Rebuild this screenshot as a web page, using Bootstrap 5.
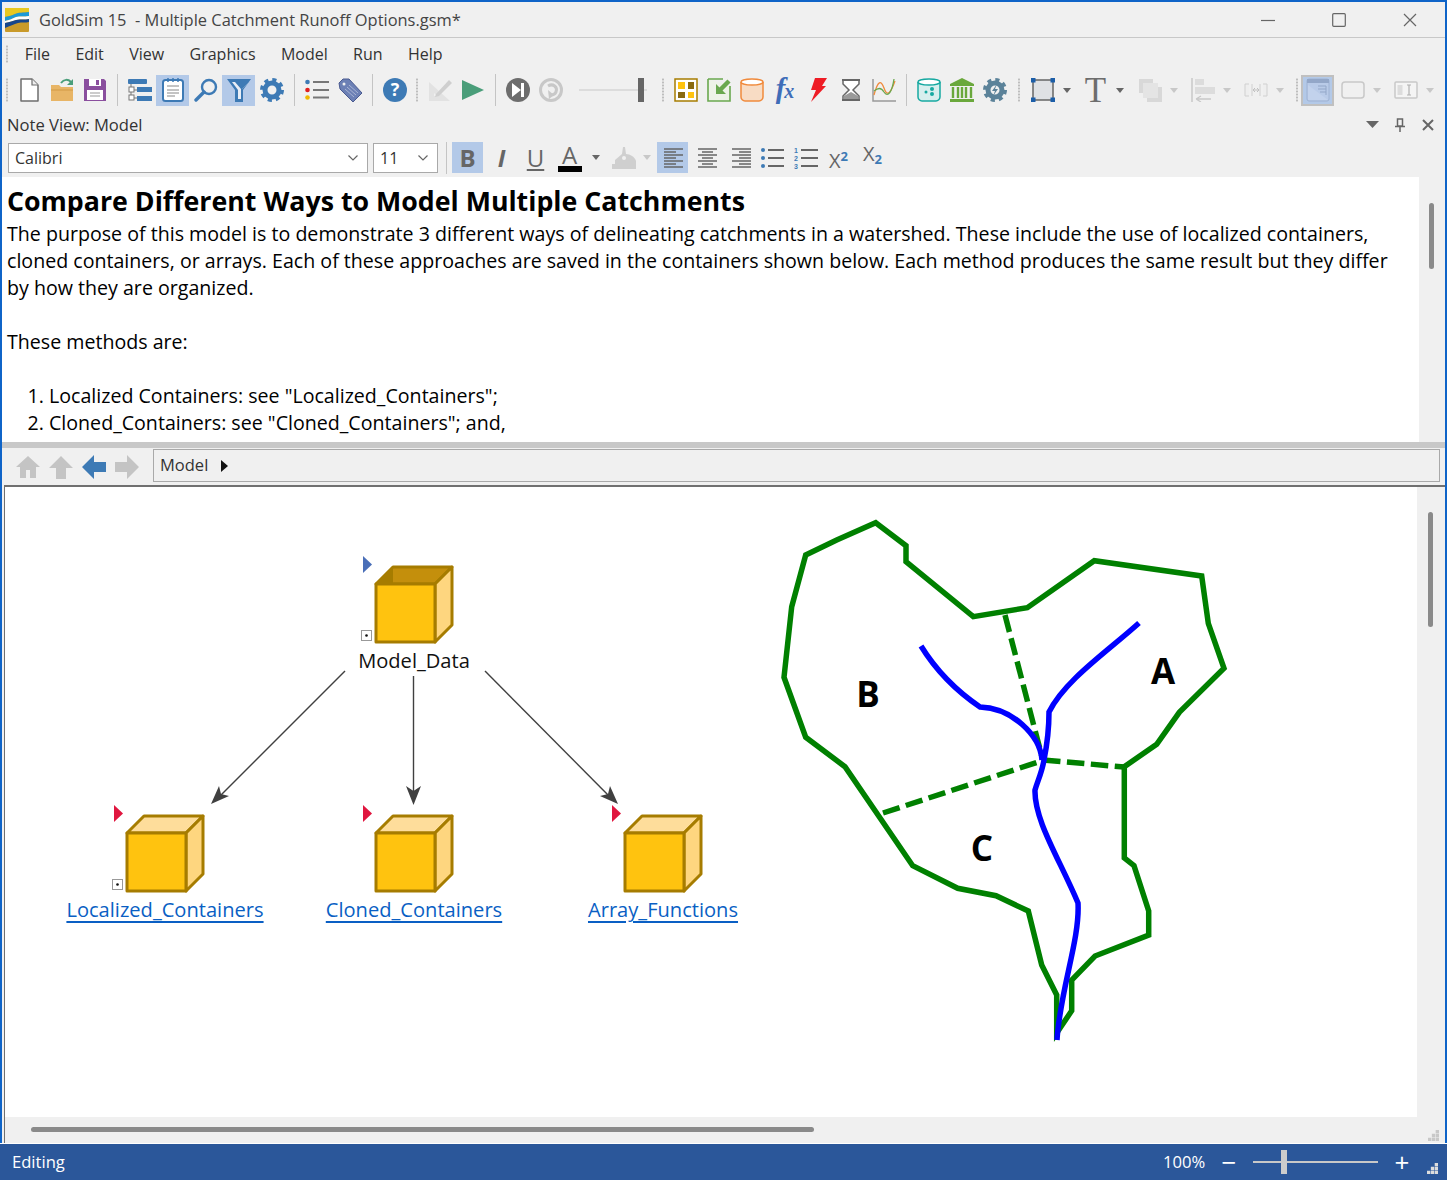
<!DOCTYPE html>
<html lang="en">
<head>
<meta charset="UTF-8" />
<title>GoldSim 15 - Multiple Catchment Runoff Options.gsm*</title>
<link rel="stylesheet" href="https://cdn.jsdelivr.net/npm/bootstrap@5.3.2/dist/css/bootstrap.min.css" />
<style>
  html, body { height: 100%; margin: 0; overflow: hidden; }
  body {
    font-family: "Open Sans", "Noto Sans", sans-serif;
    font-size: 16px;
    color: #333;
    background: #f0f0f0;
  }
  .win { height: 1180px; border: solid #0f64c8; border-width: 2px 2px 0; }
  svg { display: block; flex: none; }

  .titlebar { height: 36px; border-bottom: 1px solid #c8c8c8; color: #444; white-space: pre; }
  .title-text { font-size: 16.45px; padding-top: 2px; }
  .logo { margin: 0 10px 0 3px; }
  .winbtn { width: 71px; height: 35px; }
  .menubar { height: 33px; color: #333; padding-bottom: 2px; }
  .menubar a { color: #333; text-decoration: none; padding: 0 12.7px; }

  .grip { width: 12px; height: 24px; flex: none; background: radial-gradient(circle at center, #bdbdbd 1px, transparent 1.2px) center top / 2px 3px repeat-y; }
  .grip-menu { width: 10px; height: 18px; margin-right: 0; }
  .grip-start { width: 10px; }
  .grip-end { width: 9px; }
  .grip-wide { width: 15px; }
  .sep { width: 12px; height: 32px; flex: none; position: relative; }
  .sep::after { content: ""; position: absolute; left: 5.5px; top: 0; bottom: 0; width: 1px; background: #c4c4c4; }

  .toolbar { height: 38px; }
  .tb { width: 33px; height: 31px; flex: none; display: flex; align-items: center; justify-content: center; padding: 0; border: 0; border-radius: 0; }
  .tb.on, .tb.on:hover { background: #b3c9e8; }
  .tb.on-gray { background: #b3c9e8; outline: 2px solid #c0c0c0; outline-offset: -2px; margin-right: 2px; }
  .t-glyph { font-family: "Liberation Serif", serif; font-size: 35px; line-height: 31px; color: #6d6d6d; }
  .fx-glyph { font-family: "Liberation Serif", serif; font-style: italic; font-weight: 700; font-size: 29px; line-height: 31px; color: #3f6db8; letter-spacing: -1px; }
  .fx-glyph small { font-size: 20px; }
  .caret { width: 16px; height: 31px; flex: none; display: flex; align-items: center; justify-content: center; margin-right: 4px; }
  .caret-wide { margin-right: 5px; }
  .caret::before { content: ""; border: solid transparent; border-width: 5px 4px 0; border-top-color: #666; }
  .caret.off::before { border-top-color: #c8c8c8; }
  .caret-fmt { margin: 0; }
  .caret-fill { margin: 0 2px 0 -3px; }
  .slider-zoom { width: 90px; flex: none; }

  .noteview { height: 30px; padding: 2px 0 0 5px; font-size: 16.6px; }
  .note-tools { gap: 16px; padding-right: 11px; }
  .note-tools svg:first-child { margin-right: -2px; }
  .formatbar { height: 38px; padding-left: 6px; padding-bottom: 1px; }
  .combo { height: 30px; border: 1px solid #a9a9a9; background: #fff; padding: 0 9px 0 6px; font-size: 16px; color: #333; }
  .combo-font { width: 360px; margin-right: 5px; }
  .combo-size { width: 65px; }
  .sep-fmt { margin-left: 2px; }
  .fbtn { width: 31px; height: 31px; flex: none; display: flex; align-items: center; justify-content: center; margin-right: 3px; padding: 0; border: 0; border-radius: 0; font-family: "Open Sans", sans-serif; font-size: 24px; color: #666; line-height: 1; }
  .fbtn.on, .fbtn.on:hover { background: #b3c9e8; }
  .fbtn-tight { margin-right: 0; }
  .fbtn-a { line-height: 22px; }
  .script-x { font-size: 20px; line-height: 20px; position: relative; white-space: nowrap; }
  .script-up { top: 3px; left: 2px; }
  .script-down { top: -4px; left: 2px; }
  .script-x sup, .script-x sub { font-size: 13px; font-weight: 700; color: #3d7ab5; }
  .digits text { font-family: "Liberation Sans", sans-serif; font-size: 7px; font-weight: 700; fill: #3d7ab5; }

  .editor { height: 265px; overflow: hidden; }
  .note {
    width: 1417px; background: #fff; color: #000; padding: 7px 5px 0;
    font-size: 19.62px; line-height: 27px;
  }
  .note h1 { font-size: 26.75px; font-weight: 700; line-height: 34px; margin: 0 0 2px; color: #000; }
  .note p { margin: 0; }
  .note ol { margin: 0; padding-left: 42px; }
  .vscroll { width: 26px; flex: none; position: relative; }
  .vthumb { position: absolute; width: 5px; background: #8a8a8a; border-radius: 3px; }
  .vthumb-note { left: 10px; top: 26px; height: 66px; }
  .vthumb-canvas { left: 11px; top: 25px; height: 115px; }

  .splitter { height: 6px; background: #c8c8c8; }
  .navbar-model { height: 37px; padding-left: 9px; }
  .navbtn { width: 33px; flex: none; display: flex; justify-content: center; }
  .crumb { flex: 1; height: 33px; margin: 0 5px 2px 10px; border: 1px solid #a9a9a9; padding-left: 6px; color: #333; font-size: 16.5px; }
  .crumb-arrow { border: solid transparent; border-width: 6px 0 6px 7px; border-left-color: #111; margin-left: 13px; }

  .frame { height: 658px; border: solid #707070; border-width: 2px 0 0 1px; margin-left: 2px; }
  .canvas { width: 1412px; height: 630px; background: #fff; position: relative; overflow: hidden; }
  .node { position: absolute; width: 240px; text-align: center; color: #111; font-size: 20.1px; line-height: 26px; }
  .node a { color: #0a5fc4; text-underline-offset: 4px; }
  .n-model { left: 289px; top: 161px; }
  .n-local { left: 40px; top: 410px; }
  .n-clone { left: 289px; top: 410px; }
  .n-array { left: 538px; top: 410px; }
  .cube { position: absolute; width: 100px; height: 100px; }
  .c-model { left: 353px; top: 64px; }
  .c-local { left: 104px; top: 313px; }
  .c-clone { left: 353px; top: 313px; }
  .c-array { left: 602px; top: 313px; }
  .map-letter { font-family: "Open Sans", sans-serif; font-weight: 700; font-size: 35px; fill: #000; }

  .hscroll { height: 27px; position: relative; }
  .hthumb { position: absolute; left: 26px; top: 10px; width: 783px; height: 5px; background: #8a8a8a; border-radius: 3px; }
  .sizegrip { position: absolute; right: 6px; bottom: 3px; }

  .statusbar { height: 37px; margin: 0 -2px; border-top: 1px solid #fff; background: #2b579a; color: #fff; padding-left: 12px; font-size: 16.6px; position: relative; }
  .statusbar .sizegrip { right: 9px; bottom: 6px; }
  .zoom-pct { margin-left: auto; width: 40px; }
  .zoom-track { width: 125px; height: 2px; background: #c8c8c8; position: relative; margin: 0 14px 0 14px; }
  .zoom-thumb { position: absolute; left: 28px; top: -11px; width: 6px; height: 24px; background: #ccc; }
  .zoom-btn { width: 20px; font-size: 26px; line-height: 1; text-align: center; font-weight: 400; }
  .status-end { width: 35px; }
</style>
</head>
<body>
<svg width="0" height="0" class="position-absolute">
  <symbol id="cube" viewBox="0 0 100 100">
    <path d="M18 33 35 16H94L77 33Z" fill="#fedd9b" stroke="#a67c00" stroke-width="3" stroke-linejoin="round"/>
    <path d="M77 33 94 16V74L77 91Z" fill="#fed67f" stroke="#a67c00" stroke-width="3" stroke-linejoin="round"/>
    <rect x="18" y="33" width="59" height="58" fill="#ffc30f" stroke="#a67c00" stroke-width="3" stroke-linejoin="round"/>
  </symbol>
  <symbol id="cube-open" viewBox="0 0 100 100">
    <path d="M18 33 35 16H94L77 33Z" fill="#c48f0c" stroke="#a67c00" stroke-width="3" stroke-linejoin="round"/>
    <path d="M18 33 35 16V33Z" fill="#a67c00"/>
    <path d="M77 33 94 16V74L77 91Z" fill="#fed67f" stroke="#a67c00" stroke-width="3" stroke-linejoin="round"/>
    <rect x="18" y="33" width="59" height="58" fill="#ffc30f" stroke="#a67c00" stroke-width="3" stroke-linejoin="round"/>
  </symbol>
  <symbol id="flag" viewBox="0 0 10 18"><path d="M0 0 9 8.500 0 17Z"/></symbol>
  <symbol id="gear" viewBox="0 0 24 24">
    <circle cx="12" cy="12" r="7" fill="none" stroke="currentColor" stroke-width="5"/>
    <circle cx="12" cy="12" r="10" fill="none" stroke="currentColor" stroke-width="4" stroke-dasharray="4 3.850"/>
  </symbol>
  <symbol id="grip-dots" viewBox="0 0 10 10">
    <path fill="currentColor" d="M7 0h3v3H7zM3.500 3.500h3v3h-3zM7 3.500h3v3H7zM0 7h3v3H0zM3.500 7h3v3h-3zM7 7h3v3H7z"/>
  </symbol>
</svg>

<div class="win d-flex flex-column">

  <!-- title bar -->
  <div class="titlebar d-flex align-items-center flex-none">
    <svg class="logo" width="24" height="24" viewBox="0 0 24 24">
      <rect width="24" height="24" rx="1" fill="#c99a2a"/>
      <path d="M0 0H24V4C18 5 14 4 10 6 6 8 3 8 0 9Z" fill="#e8c820"/>
      <path d="M24 4C18 5 14 4 10 6 6 8 3 8 0 9V13C4 12 7 11 11 9 15 8 19 9 24 8Z" fill="#1c9ad6"/>
      <path d="M24 8C19 9 15 8 11 9 7 11 4 12 0 13V15C5 14 8 13 11 12 16 11 20 12 24 11Z" fill="#fff"/>
      <path d="M24 11C20 12 16 11 11 12 8 13 5 14 0 15V20C5 18 9 16 13 15 17 14 21 15 24 14Z" fill="#17468c"/>
    </svg>
    <span class="title-text">GoldSim 15  - Multiple Catchment Runoff Options.gsm*</span>
    <div class="d-flex ms-auto">
      <div class="winbtn d-flex align-items-center justify-content-center"><svg width="14" height="14"><path d="M0 7.500H14" stroke="#666" stroke-width="1.200"/></svg></div>
      <div class="winbtn d-flex align-items-center justify-content-center"><svg width="14" height="14"><rect x=".7" y=".7" width="12.600" height="12.600" rx="1" fill="none" stroke="#666" stroke-width="1.200"/></svg></div>
      <div class="winbtn d-flex align-items-center justify-content-center"><svg width="14" height="14"><path d="M1 1 13 13M13 1 1 13" stroke="#666" stroke-width="1.200"/></svg></div>
    </div>
  </div>

  <!-- menu -->
  <nav class="menubar d-flex align-items-center">
    <div class="grip grip-menu"></div>
    <a href="#">File</a><a href="#">Edit</a><a href="#">View</a><a href="#">Graphics</a><a href="#">Model</a><a href="#">Run</a><a href="#">Help</a>
  </nav>

  <!-- main toolbar -->
  <div class="toolbar d-flex align-items-center">
    <div class="grip grip-start"></div>
    <button class="tb btn"><svg width="24" height="24" viewBox="0 0 24 24"><path d="M4 1H15L21 7V23H4Z" fill="#fff" stroke="#6e6e6e" stroke-width="1.500" stroke-linejoin="round"/><path d="M15 1V7H21" fill="#eee" stroke="#6e6e6e" stroke-width="1.200"/></svg></button>
    <button class="tb btn"><svg width="24" height="24" viewBox="0 0 24 24"><path d="M1 10V7H9L11 9H23V23H1Z" fill="#e8b566"/><path d="M1 12H23" stroke="#d19a45"/><path d="M11 5C14 1 18 1 21 4" fill="none" stroke="#4a9e7a" stroke-width="2"/><path d="M23 1V7H17Z" fill="#4a9e7a"/></svg></button>
    <button class="tb btn"><svg width="24" height="24" viewBox="0 0 24 24"><path d="M1 1H21L23 3V23H1Z" fill="#8a4f9e"/><rect x="6" y="1" width="12" height="7" fill="#fff"/><rect x="13" y="2" width="3" height="5" fill="#8a4f9e"/><rect x="4" y="12" width="16" height="10" fill="#fff"/><path d="M7 15H17M7 18H17" stroke="#999"/></svg></button>
    <div class="sep"></div>
    <button class="tb btn"><svg width="24" height="24" viewBox="0 0 24 24"><rect y="1" width="19" height="5" rx="1" fill="#3d7ab5"/><path d="M3 6V20M3 12H10M3 20H10" stroke="#777" fill="none"/><rect x="1" y="9" width="5" height="5" fill="#fff" stroke="#777"/><rect x="1" y="17" width="5" height="5" fill="#fff" stroke="#777"/><rect x="9" y="9" width="15" height="5" fill="#3d7ab5"/><rect x="9" y="18" width="15" height="5" fill="#3d7ab5"/></svg></button>
    <button class="tb btn on"><svg width="24" height="24" viewBox="0 0 24 24"><rect x="2" y="2" width="20" height="21" rx="2.500" fill="#fff" stroke="#3d7ab5" stroke-width="2"/><path d="M6 8H18M6 12H18M6 15H18M6 18H14" stroke="#888"/><path d="M7 0V4M12 0V4M17 0V4" stroke="#3d7ab5" stroke-width="1.500"/></svg></button>
    <button class="tb btn"><svg width="24" height="24" viewBox="0 0 24 24"><circle cx="15" cy="9" r="7" fill="none" stroke="#3d7ab5" stroke-width="2.400"/><path d="M10 14 2 22" stroke="#3d7ab5" stroke-width="3.400" stroke-linecap="round"/></svg></button>
    <button class="tb btn on"><svg width="24" height="24" viewBox="0 0 24 24"><path d="M0 1H24L16 12V24H8V12Z" fill="#3d7ab5"/><path d="M5 4H22L14 12V21H11V12Z" fill="#e9eef6"/><path d="M8 4H22L15 11V21H14V11Z" fill="#3d7ab5"/></svg></button>
    <button class="tb btn"><svg width="24" height="24" style="color:#3d7ab5"><use href="#gear"/></svg></button>
    <div class="sep"></div>
    <button class="tb btn"><svg width="24" height="24" viewBox="0 0 24 24"><circle cx="2.500" cy="4" r="2.300" fill="#3d7ab5"/><circle cx="2.500" cy="12" r="2.300" fill="#e02020"/><circle cx="2.500" cy="19.500" r="2.300" fill="#f0b800"/><path d="M8 4H24M8 12H24M8 19.500H24" stroke="#777" stroke-width="2"/></svg></button>
    <button class="tb btn"><svg width="24" height="24" viewBox="0 0 24 24"><path d="M1 5 5 1H11L24 15 15 24 2 11Z" fill="#6c80b5" stroke="#4a5a90"/><circle cx="6" cy="6" r="1.500" fill="#f0f0f0"/><path d="M9 9 18 17M11 7 20 15M7 11 16 19" stroke="#a8b4d4"/></svg></button>
    <div class="sep"></div>
    <button class="tb btn"><svg width="24" height="24" viewBox="0 0 24 24"><circle cx="12" cy="12" r="12" fill="#3d7ab5"/><text x="12" y="18" text-anchor="middle" font-family="Open Sans, sans-serif" font-weight="700" font-size="18" fill="#fff">?</text></svg></button>
    <div class="grip"></div>
    <button class="tb btn"><svg width="24" height="24" viewBox="0 0 24 24"><path d="M1 4V23H22Z" fill="#e2e2e2"/><path d="M6 15V18H9Z" fill="#f0f0f0"/><path d="M8 16 21 2 24 5 11 18 7 19Z" fill="#cfcfcf"/></svg></button>
    <button class="tb btn"><svg width="24" height="24" viewBox="0 0 24 24"><path d="M1 2 23 12 1 22Z" fill="#4a9e7a"/></svg></button>
    <div class="sep"></div>
    <button class="tb btn"><svg width="24" height="24" viewBox="0 0 24 24"><circle cx="12" cy="12" r="12" fill="#6d6d6d"/><path d="M6 5 15 12 6 19Z" fill="#fff"/><rect x="15" y="5" width="3" height="14" fill="#fff"/></svg></button>
    <button class="tb btn"><svg width="24" height="24" viewBox="0 0 24 24"><circle cx="12" cy="12" r="10.500" fill="#f0f0f0" stroke="#c8c8c8" stroke-width="3"/><path d="M9 8C14 5 19 9 17 14 16 16 14 17 12 17" fill="none" stroke="#c8c8c8" stroke-width="3"/><path d="M9 12 15 17 10 21Z" fill="#c8c8c8"/></svg></button>
    <div class="slider-zoom"><svg width="90" height="24"><path d="M12 12H80" stroke="#c8c8c8"/><rect x="71" width="6" height="24" fill="#666"/></svg></div>
    <div class="grip"></div>
    <button class="tb btn"><svg width="24" height="24" viewBox="0 0 24 24"><rect x="1" y="1" width="22" height="22" fill="#fff" stroke="#a67c00" stroke-width="1.500"/><rect x="4" y="4" width="7" height="7" fill="#ffc30f"/><rect x="14" y="4" width="6" height="7" fill="#8a6a10"/><rect x="4" y="14" width="7" height="6" fill="#8a6a10"/><rect x="14" y="14" width="6" height="6" fill="#ffc30f"/></svg></button>
    <button class="tb btn"><svg width="24" height="24" viewBox="0 0 24 24"><path d="M1 1H16M1 1V23H23V8" fill="#eef3e8" stroke="#6aa84f" stroke-width="1.600"/><path d="M22 3 13 12" stroke="#6aa84f" stroke-width="4.500"/><path d="M9 6V16H19Z" fill="#6aa84f"/></svg></button>
    <button class="tb btn"><svg width="24" height="24" viewBox="0 0 24 24"><path d="M1 4V19C1 21 3 23 5 23H19C21 23 23 21 23 19V4" fill="#f8dcc4" stroke="#f08a3c" stroke-width="1.500"/><ellipse cx="12" cy="4" rx="11" ry="3" fill="#fff" stroke="#f08a3c" stroke-width="1.500"/></svg></button>
    <button class="tb btn"><span class="fx-glyph">f<small>x</small></span></button>
    <button class="tb btn"><svg width="24" height="24" viewBox="0 0 24 24"><path d="M9 0H21L16 8H20L5 24 10 12H5Z" fill="#ee1c25"/></svg></button>
    <button class="tb btn"><svg width="24" height="24" viewBox="0 0 24 24"><path d="M4 2V6L10 12 4 18V22H20V18L14 12 20 6V2Z" fill="#fff" stroke="#666" stroke-width="1.500"/><path d="M5 21V18L12 14 19 18V21Z" fill="#999"/><path d="M3 2H21M3 22H21" stroke="#666" stroke-width="2"/></svg></button>
    <button class="tb btn"><svg width="24" height="24" viewBox="0 0 24 24"><path d="M1 1V23H24" fill="none" stroke="#999" stroke-width="1.500"/><path d="M2 17C6 2 9 2 12 10 14 16 17 20 23 3" fill="none" stroke="#f08a3c" stroke-width="1.300"/><path d="M2 13C6 10 9 9 12 14 16 20 20 14 22 1" fill="none" stroke="#6aa84f" stroke-width="1.300"/></svg></button>
    <div class="sep"></div>
    <button class="tb btn"><svg width="24" height="24" viewBox="0 0 24 24"><path d="M1 4V19C1 21 3 23 5 23H19C21 23 23 21 23 19V4" fill="#d8efee" stroke="#17a9a1" stroke-width="1.500"/><ellipse cx="12" cy="4" rx="11" ry="3" fill="#fff" stroke="#17a9a1" stroke-width="1.500"/><circle cx="15" cy="11" r="2" fill="#17a9a1"/><circle cx="9" cy="14" r="1.500" fill="#17a9a1"/><circle cx="15" cy="16" r="2" fill="#17a9a1"/></svg></button>
    <button class="tb btn"><svg width="24" height="24" viewBox="0 0 24 24"><path d="M12 0 24 6V8H0V6Z" fill="#6aa83c"/><path d="M3 9V20M8 9V20M12 9V20M16 9V20M21 9V20" stroke="#6aa83c" stroke-width="2.400"/><rect y="21" width="24" height="3" fill="#6aa83c"/></svg></button>
    <button class="tb btn"><svg width="24" height="24" viewBox="0 0 24 24" style="color:#5b8299"><use href="#gear"/><path d="M14 6 9 13H12L10 18 15 11H12Z" fill="#5b8299"/></svg></button>
    <div class="grip grip-wide"></div>
    <button class="tb btn"><svg width="24" height="24" viewBox="0 0 24 24"><rect x="2" y="2" width="20" height="20" fill="#dfe1e4" stroke="#666" stroke-width="1.500"/><path fill="#1c5ea8" d="M0 0H4.500V4.500H0zM19.500 0H24V4.500H19.500zM0 19.500H4.500V24H0zM19.500 19.500H24V24H19.500z"/></svg></button>
    <span class="caret"></span>
    <button class="tb btn"><span class="t-glyph">T</span></button>
    <span class="caret caret-wide"></span>
    <button class="tb btn"><svg width="24" height="24" viewBox="0 0 24 24"><rect x="1" y="1" width="14" height="14" fill="#d8d8d8"/><rect x="9" y="9" width="15" height="15" fill="#d8d8d8"/><rect x="5" y="5" width="15" height="15" fill="#e4e4e4"/></svg></button>
    <span class="caret off"></span>
    <button class="tb btn"><svg width="24" height="24" viewBox="0 0 24 24"><path d="M1 0V24" stroke="#c8c8c8" stroke-width="1.500"/><rect x="4" y="1" width="9" height="6" fill="#dcdcdc"/><rect x="4" y="9" width="20" height="7" fill="#dcdcdc"/><path d="M5 21H20M5 21 10 18M5 21 10 24" fill="none" stroke="#c8c8c8" stroke-width="1.300"/></svg></button>
    <span class="caret off"></span>
    <button class="tb btn"><svg width="24" height="24" viewBox="0 0 24 24"><path d="M5 6H1V18H5M19 6H23V18H19" fill="#eee" stroke="#d0d0d0"/><path d="M8 6V18M16 6V18" stroke="#d0d0d0"/><path d="M9 12H15M9 12 11 10M9 12 11 14M15 12 13 10M15 12 13 14" fill="none" stroke="#c0c0c0"/></svg></button>
    <span class="caret off"></span>
    <div class="grip grip-end"></div>
    <button class="tb btn on-gray"><svg width="24" height="24" viewBox="0 0 24 24"><rect x="1" y="1" width="22" height="22" rx="2" fill="#b9cbe8" stroke="#9fb2d2"/><rect x="1" y="1" width="22" height="4" fill="#93a7c8"/><path d="M12 8H20V17M12 11H20M14 14H20" fill="none" stroke="#93a7c8"/><path d="M2 7V22H22Z" fill="#c2d2ec"/></svg></button>
    <span class="tb"><svg width="24" height="24" viewBox="0 0 24 24"><rect x="1" y="4" width="22" height="16" rx="3" fill="none" stroke="#c8c8c8" stroke-width="1.500"/></svg></span>
    <span class="caret off"></span>
    <span class="tb"><svg width="24" height="24" viewBox="0 0 24 24"><rect x="1" y="4" width="22" height="16" rx="1" fill="#f4f4f4" stroke="#c8c8c8" stroke-width="1.500"/><rect x="3.500" y="7" width="5" height="10" fill="#dcdcdc"/><path d="M13 7H17M13 17H17M15 7V17" stroke="#b0b0b0" stroke-width="1.200"/></svg></span>
    <span class="caret off"></span>
  </div>

  <!-- note pane header -->
  <div class="noteview d-flex align-items-center">
    <span>Note View: Model</span>
    <div class="note-tools d-flex align-items-center ms-auto">
      <svg width="14" height="8"><path d="M0 0H13L6.500 7Z" fill="#666"/></svg>
      <svg width="12" height="14"><path d="M3.500 1H8.500V8H3.500ZM1 8.500H11M6 8.500V14" fill="none" stroke="#666" stroke-width="1.500"/></svg>
      <svg width="12" height="12"><path d="M1 1 11 11M11 1 1 11" stroke="#666" stroke-width="2"/></svg>
    </div>
  </div>

  <!-- formatting bar -->
  <div class="formatbar d-flex align-items-center">
    <div class="combo combo-font d-flex align-items-center justify-content-between"><span>Calibri</span><svg width="10" height="6"><path d="M.5 .5 5 5 9.500 .5" fill="none" stroke="#666" stroke-width="1.200"/></svg></div>
    <div class="combo combo-size d-flex align-items-center justify-content-between"><span>11</span><svg width="10" height="6"><path d="M.5 .5 5 5 9.500 .5" fill="none" stroke="#666" stroke-width="1.200"/></svg></div>
    <div class="sep sep-fmt"></div>
    <button class="fbtn btn on fw-bold">B</button>
    <button class="fbtn btn fst-italic fw-bold">I</button>
    <button class="fbtn btn text-decoration-underline">U</button>
    <button class="fbtn btn flex-column"><span class="fbtn-a">A</span><svg width="24" height="6"><rect width="24" height="6" fill="#000"/></svg></button>
    <span class="caret caret-fmt"></span>
    <button class="fbtn btn ms-1"><svg width="24" height="24" viewBox="0 0 24 24"><path d="M3 14 10 8 11 1 13 1 14 8 C18 8 23 11 24 15V18H0V23H24V18H3Z" fill="#cfcfcf"/><circle cx="12" cy="12" r="2" fill="#f0f0f0"/></svg></button>
    <span class="caret off caret-fill"></span>
    <button class="fbtn btn on"><svg width="24" height="24" viewBox="0 0 24 24"><path d="M3 3H22M3 6H15M3 9H22M3 12H15M3 15H22M3 18H15M3 21H22" stroke="#666" stroke-width="1.500"/></svg></button>
    <button class="fbtn btn"><svg width="24" height="24" viewBox="0 0 24 24"><path d="M3 3H22M7 6H18M3 9H22M7 12H18M3 15H22M7 18H18M3 21H22" stroke="#666" stroke-width="1.500"/></svg></button>
    <button class="fbtn btn fbtn-tight"><svg width="24" height="24" viewBox="0 0 24 24"><path d="M3 3H22M10 6H22M3 9H22M10 12H22M3 15H22M10 18H22M3 21H22" stroke="#666" stroke-width="1.500"/></svg></button>
    <button class="fbtn btn"><svg width="24" height="24" viewBox="0 0 24 24"><circle cx="3" cy="4" r="2" fill="#3d7ab5"/><circle cx="3" cy="12" r="2" fill="#3d7ab5"/><circle cx="3" cy="20" r="2" fill="#3d7ab5"/><path d="M8 4H24M8 12H24M8 20H24" stroke="#666" stroke-width="2"/></svg></button>
    <button class="fbtn btn fbtn-tight"><svg class="digits" width="24" height="30" viewBox="0 -3 24 30"><text x="0" y="6.500">1</text><text x="0" y="14.500">2</text><text x="0" y="22.500">3</text><path d="M7 4H24M7 12H24M7 20H24" stroke="#666" stroke-width="2"/></svg></button>
    <button class="fbtn btn"><span class="script-x script-up">X<sup>2</sup></span></button>
    <button class="fbtn btn"><span class="script-x script-down">X<sub>2</sub></span></button>
  </div>

  <!-- note body -->
  <div class="editor d-flex">
    <div class="note flex-grow-1">
      <h1>Compare Different Ways to Model Multiple Catchments</h1>
      <p>The purpose of this model is to demonstrate 3 different ways of delineating catchments in a watershed. These include the use of localized containers, cloned containers, or arrays. Each of these approaches are saved in the containers shown below. Each method produces the same result but they differ by how they are organized.</p>
      <p>&nbsp;</p>
      <p>These methods are:</p>
      <p>&nbsp;</p>
      <ol>
        <li>Localized Containers: see "Localized_Containers";</li>
        <li>Cloned_Containers: see "Cloned_Containers"; and,</li>
      </ol>
    </div>
    <div class="vscroll"><div class="vthumb vthumb-note"></div></div>
  </div>

  <div class="splitter"></div>

  <!-- model browser path -->
  <div class="navbar-model d-flex align-items-center">
    <span class="navbtn"><svg width="24" height="24" viewBox="0 0 24 24"><path d="M12 1 24 12H20V23H14V15H10V23H4V12H0Z" fill="#c4c4c4"/></svg></span>
    <span class="navbtn"><svg width="24" height="24" viewBox="0 0 24 24"><path d="M12 1 24 13H17V24H7V13H0Z" fill="#c4c4c4"/></svg></span>
    <span class="navbtn"><svg width="24" height="24" viewBox="0 0 24 24"><path d="M0 12 12 0V7H24V17H12V24Z" fill="#3d7ab5"/></svg></span>
    <span class="navbtn"><svg width="24" height="24" viewBox="0 0 24 24"><path d="M24 12 12 0V7H0V17H12V24Z" fill="#c4c4c4"/></svg></span>
    <div class="crumb d-flex align-items-center"><span>Model</span><span class="crumb-arrow"></span></div>
  </div>

  <!-- model canvas -->
  <div class="frame">
    <div class="d-flex">
      <div class="canvas">
        <svg class="position-absolute top-0 start-0" width="1412" height="630" viewBox="5 487 1412 630">
          <g stroke="#404040" stroke-width="1.400" fill="#404040">
            <path d="M345 671 217 799"/>
            <path d="M413.500 676V798"/>
            <path d="M485 671 612 799"/>
          </g>
          <g fill="#404040">
            <path d="M211 804 219 786 221 794 229 796Z"/>
            <path d="M413.500 805 406 786 413.500 791 421 786Z"/>
            <path d="M618 804 600 796 608 794 610 786Z"/>
          </g>

          <path fill="none" stroke="#008000" stroke-width="5.500" stroke-linejoin="miter" d="M875.700 522.700 906 545.700V561.700L973.300 616.700 1027.300 607.700 1094.300 560.700 1201.700 576 1208.300 623.300 1224 668.300 1179.300 712.300 1156.700 744.300 1124.300 766.700V858L1134 865.700 1148.700 911V935L1095 956 1071.700 980V1010.700L1056.700 1033V995L1041.700 965 1028.300 911 996 895.700 957.700 888.300 912.700 865.700 845 766.700 805.700 737.300 784 677.300 791.700 606.700 805.700 555 836.700 540Z"/>
          <g fill="none" stroke="#008000" stroke-width="5.500" stroke-dasharray="17.500 6.500">
            <path d="M1005 615 1042 757"/>
            <path d="M883 813 1038 762"/>
            <path d="M1043 760 1124 767"/>
          </g>
          <g fill="none" stroke="#0000ff" stroke-width="5.500">
            <path d="M921 646C937 672 958 692 980 707 1012 708 1040 735 1042 760"/>
            <path d="M1139 623C1108 651 1065 680 1049 712 1049 728 1047 745 1044 760 1042 772 1038 780 1035 790 1034 820 1060 860 1078 903 1080 940 1060 990 1057 1040"/>
          </g>
          <text class="map-letter" x="1163" y="684" text-anchor="middle">A</text>
          <text class="map-letter" x="868" y="707" text-anchor="middle">B</text>
          <text class="map-letter" x="982" y="861" text-anchor="middle">C</text>
        </svg>

        <svg class="cube c-model"><use href="#cube-open"/></svg>
        <svg class="cube c-local"><use href="#cube"/></svg>
        <svg class="cube c-clone"><use href="#cube"/></svg>
        <svg class="cube c-array"><use href="#cube"/></svg>

        <div class="node n-model">Model_Data</div>
        <div class="node n-local"><a href="#">Localized_Containers</a></div>
        <div class="node n-clone"><a href="#">Cloned_Containers</a></div>
        <div class="node n-array"><a href="#">Array_Functions</a></div>

        <svg class="position-absolute top-0 start-0" width="1412" height="630" viewBox="5 487 1412 630">
          <use href="#flag" x="363" y="556" width="10" height="18" fill="#4a6fb8"/>
          <use href="#flag" x="114" y="805" width="10" height="18" fill="#e0163f"/>
          <use href="#flag" x="363" y="805" width="10" height="18" fill="#e0163f"/>
          <use href="#flag" x="612" y="805" width="10" height="18" fill="#e0163f"/>
          <g fill="#fff" stroke="#999">
            <rect x="361.500" y="630.500" width="10" height="10"/>
            <rect x="112.500" y="879.500" width="10" height="10"/>
          </g>
          <circle cx="366.500" cy="635.500" r="1.300" fill="#111"/>
          <circle cx="117.500" cy="884.500" r="1.300" fill="#111"/>
        </svg>
      </div>
      <div class="vscroll"><div class="vthumb vthumb-canvas"></div></div>
    </div>
    <div class="hscroll">
      <div class="hthumb"></div>
      <svg class="sizegrip" width="11" height="11" style="color:#c8c8c8"><use href="#grip-dots"/></svg>
    </div>
  </div>

  <!-- status bar -->
  <div class="statusbar d-flex align-items-center">
    <span>Editing</span>
    <span class="zoom-pct">100%</span>
    <span class="zoom-btn ms-3">&minus;</span>
    <div class="zoom-track"><div class="zoom-thumb"></div></div>
    <span class="zoom-btn">+</span>
    <div class="status-end"></div>
    <svg class="sizegrip" width="11" height="11" style="color:#ddd"><use href="#grip-dots"/></svg>
  </div>
</div>

<script src="https://cdn.jsdelivr.net/npm/bootstrap@5.3.2/dist/js/bootstrap.bundle.min.js"></script>
</body>
</html>
